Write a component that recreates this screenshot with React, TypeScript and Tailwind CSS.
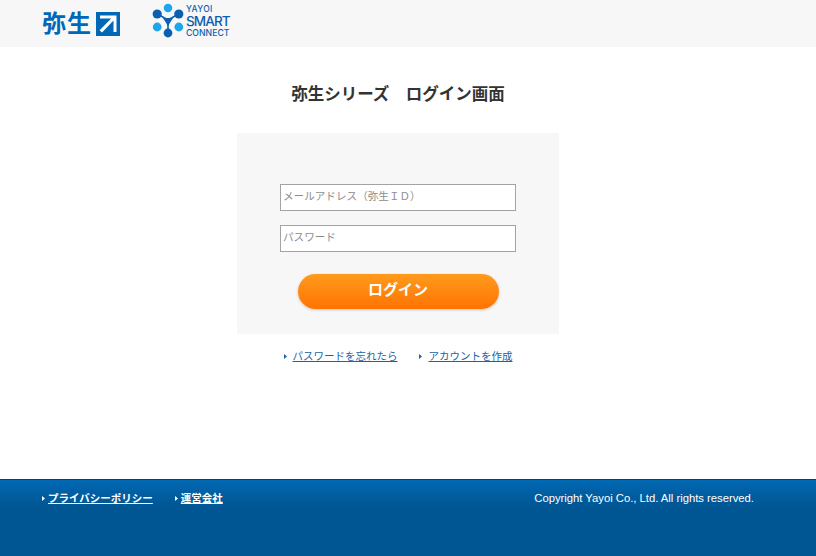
import React from "react";

const jp = "font-['Liberation_Sans','Noto_Sans_CJK_JP',sans-serif]";

const Caret = ({ className }: { className: string }) => (
  <svg width="3" height="5" viewBox="0 0 3 5" className={className}>
    <path d="M0 0 L3 2.5 L0 5 Z" fill="currentColor" />
  </svg>
);

const YayoiLogo = () => (
  <div className="flex items-center gap-[4px]">
    <span className="text-[24px] leading-none font-bold tracking-[1px] text-[#0068b7]">弥生</span>
    <svg width="24" height="24" viewBox="0 0 24 24">
      <rect width="24" height="24" fill="#0068b7" />
      <path d="M4 3.5 H20.5 V20 H17.5 V8.6 L6 20.5 L3.6 18.2 L15.2 6.5 H4 Z" fill="#fff" />
    </svg>
  </div>
);

const SmartConnectLogo = () => (
  <div className="flex items-center gap-[1px]">
    <svg width="33" height="35" viewBox="0 0 33 35" className="-mt-[6px]">
      <g stroke="#0a5fb0" strokeWidth="1.6">
        <line x1="5.5" y1="11" x2="16" y2="17" />
        <line x1="26.5" y1="11" x2="16" y2="17" />
        <line x1="16" y1="17" x2="16" y2="30" />
      </g>
      <path d="M11 15 H21 L16 23 Z" fill="#0a5fb0" />
      <circle cx="16" cy="5" r="4.3" fill="#1ca7ec" />
      <circle cx="5.2" cy="11" r="4.6" fill="#0a5fb0" />
      <circle cx="26.8" cy="11" r="4.6" fill="#0a5fb0" />
      <circle cx="5.2" cy="24" r="4.4" fill="#1ca7ec" />
      <circle cx="26.8" cy="24" r="4.4" fill="#1ca7ec" />
      <circle cx="16" cy="30" r="4.4" fill="#0a5fb0" />
    </svg>
    <div className="-mt-[5px] flex flex-col text-[#0a5fb0] font-['Inter',sans-serif]">
      <span className="text-[8.5px] leading-[9px] font-medium tracking-[0.3px]">YAYOI</span>
      <span className="text-[13.5px] leading-[14px] font-medium tracking-[-0.9px]">SMART</span>
      <span className="text-[8.7px] leading-[10px] font-medium">CONNECT</span>
    </div>
  </div>
);

export default function App() {
  return (
    <div className={`flex h-[556px] flex-col bg-white ${jp}`}>
      <header className="flex h-[47px] items-center gap-[32px] bg-[#f7f7f7] pl-[42px]">
        <YayoiLogo />
        <SmartConnectLogo />
      </header>

      <main className="flex flex-1 flex-col items-center pr-[20px]">
        <h1 className="mt-[35px] text-[16.5px] leading-6 font-bold text-[#333]">弥生シリーズ　ログイン画面</h1>

        <form className="mt-[27px] flex h-[201px] w-[322px] flex-col items-center bg-[#f7f7f7] pt-[51px]">
          <input
            placeholder="メールアドレス（弥生ＩＤ）"
            className="h-[27px] w-[236px] border border-[#a3a3a3] bg-white px-[2px] pb-[3px] text-[10.6px] outline-none placeholder:text-[#8c8c8c]"
          />
          <input
            placeholder="パスワード"
            className="mt-[14px] h-[27px] w-[236px] border border-[#a3a3a3] bg-white px-[2px] pb-[3px] text-[10.6px] outline-none placeholder:text-[#8c8c8c]"
          />
          <button
            type="button"
            className="mt-[22px] h-[35px] w-[201px] rounded-[18px] bg-gradient-to-b from-[#ff9a1c] to-[#ff7300] pb-[2px] text-[15px] font-bold text-white shadow-[0_1px_3px_rgba(0,0,0,0.2)]"
          >
            ログイン
          </button>
        </form>

        <div className="mt-[14px] flex items-center text-[10.5px] leading-4 text-[#1a63a8]">
          <Caret className="mr-[6px] text-[#1a63a8]" />
          <a href="#" className="underline">パスワードを忘れたら</a>
          <Caret className="mr-[7px] ml-[21px] text-[#1a63a8]" />
          <a href="#" className="underline">アカウントを作成</a>
        </div>
      </main>

      <footer className="h-[77px] border-t border-[#0b3f70] bg-gradient-to-b from-[#0168b3] to-[#005693] to-[35%] pt-[10px] pr-[62px] pl-[42px] text-white">
        <div className="flex items-center text-[10.5px] leading-4 font-bold">
          <Caret className="mr-[3px]" />
          <a href="#" className="underline">プライバシーポリシー</a>
          <Caret className="mr-[3px] ml-[22px]" />
          <a href="#" className="underline">運営会社</a>
          <span className="ml-auto text-[11.25px] font-normal">Copyright Yayoi Co., Ltd. All rights reserved.</span>
        </div>
      </footer>
    </div>
  );
}
